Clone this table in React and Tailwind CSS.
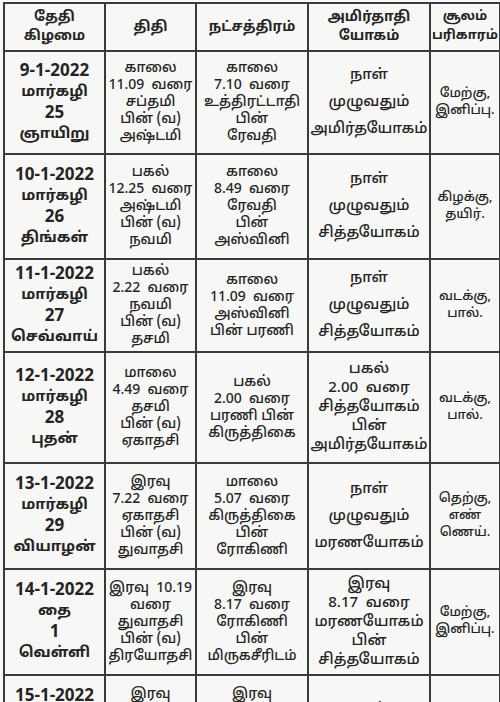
import React from "react";

const rows = [
  {
    h: "h-[103px]",
    date: ["9-1-2022", "மார்கழி", "25", "ஞாயிறு"],
    thithi: ["காலை", "11.09  வரை", "சப்தமி", "பின் (வ)", "அஷ்டமி"],
    star: ["காலை", "7.10  வரை", "உத்திரட்டாதி", "பின்", "ரேவதி"],
    yogam: ["நாள்", "முழுவதும்", "அமிர்தயோகம்"],
    soolam: ["மேற்கு,", "இனிப்பு."],
    spread: true,
  },
  {
    h: "h-[105px]",
    date: ["10-1-2022", "மார்கழி", "26", "திங்கள்"],
    thithi: ["பகல்", "12.25  வரை", "அஷ்டமி", "பின் (வ)", "நவமி"],
    star: ["காலை", "8.49  வரை", "ரேவதி", "பின்", "அஸ்வினி"],
    yogam: ["நாள்", "முழுவதும்", "சித்தயோகம்"],
    soolam: ["கிழக்கு,", "தயிர்."],
    spread: true,
  },
  {
    h: "h-[93px]",
    date: ["11-1-2022", "மார்கழி", "27", "செவ்வாய்"],
    thithi: ["பகல்", "2.22  வரை", "நவமி", "பின் (வ)", "தசமி"],
    star: ["காலை", "11.09  வரை", "அஸ்வினி", "பின் பரணி"],
    yogam: ["நாள்", "முழுவதும்", "சித்தயோகம்"],
    soolam: ["வடக்கு,", "பால்."],
    spread: true,
  },
  {
    h: "h-[111px]",
    date: ["12-1-2022", "மார்கழி", "28", "புதன்"],
    thithi: ["மாலை", "4.49  வரை", "தசமி", "பின் (வ)", "ஏகாதசி"],
    star: ["பகல்", "2.00  வரை", "பரணி பின்", "கிருத்திகை"],
    yogam: ["பகல்", "2.00  வரை", "சித்தயோகம்", "பின்", "அமிர்தயோகம்"],
    soolam: ["வடக்கு,", "பால்."],
  },
  {
    h: "h-[106px]",
    date: ["13-1-2022", "மார்கழி", "29", "வியாழன்"],
    thithi: ["இரவு", "7.22  வரை", "ஏகாதசி", "பின் (வ)", "துவாதசி"],
    star: ["மாலை", "5.07  வரை", "கிருத்திகை", "பின்", "ரோகிணி"],
    yogam: ["நாள்", "முழுவதும்", "மரணயோகம்"],
    soolam: ["தெற்கு,", "எண்", "ணெய்."],
    spread: true,
  },
  {
    h: "h-[106px]",
    date: ["14-1-2022", "தை", "1", "வெள்ளி"],
    thithi: ["இரவு  10.19", "வரை", "துவாதசி", "பின் (வ)", "திரயோதசி"],
    star: ["இரவு", "8.17  வரை", "ரோகிணி", "பின்", "மிருகசீரிடம்"],
    yogam: ["இரவு", "8.17  வரை", "மரணயோகம்", "பின்", "சித்தயோகம்"],
    soolam: ["மேற்கு,", "இனிப்பு."],
  },
  {
    h: "h-[106px]",
    date: ["15-1-2022", "தை", "2", "சனி"],
    thithi: ["இரவு", "12.57  வரை", "திரயோதசி", "பின் (வ)", "சதுர்த்தசி"],
    star: ["இரவு", "11.01  வரை", "மிருகசீரிடம்", "பின்", "திருவாதிரை"],
    yogam: ["நாள்", "முழுவதும்", "சித்தயோகம்"],
    soolam: ["கிழக்கு,", "தயிர்."],
  },
];

function Lines({ items, spread, dates }) {
  return (
    <div className={spread ? "flex flex-col gap-[8px]" : "flex flex-col"}>
      {items.map((t, i) => (
        <span
          key={i}
          className={
            dates && (i === 1 || i === 3)
              ? "whitespace-pre text-[15px]"
              : "whitespace-pre"
          }
        >
          {t}
        </span>
      ))}
    </div>
  );
}

export default function App() {
  const cell = "border-2 border-[#3a3a3a] text-center align-middle p-0 overflow-hidden";
  return (
    <div
      className="w-[500px] h-[702px] overflow-hidden bg-[#f7f7f5] pt-[2px] pl-[3px] text-[#242424]"
      style={{ fontFamily: '"Noto Sans Tamil", "Noto Sans", "Lohit Tamil", sans-serif' }}
    >
      <table className="table-fixed border-collapse w-[496px] text-[14px] leading-[17px] font-medium">
        <colgroup>
          <col className="w-[101px]" />
          <col className="w-[91px]" />
          <col className="w-[112px]" />
          <col className="w-[122px]" />
          <col className="w-[70px]" />
        </colgroup>
        <thead>
          <tr className="h-[48px] leading-[19px]">
            <th className={cell + " font-bold"}>
              தேதி
              <br />
              கிழமை
            </th>
            <th className={cell + " font-bold"}>திதி</th>
            <th className={cell + " font-bold"}>நட்சத்திரம்</th>
            <th className={cell + " font-bold"}>
              அமிர்தாதி
              <br />
              யோகம்
            </th>
            <th className={cell + " font-bold text-[13px]"}>
              சூலம்
              <br />
              பரிகாரம்
            </th>
          </tr>
        </thead>
        <tbody>
          {rows.map((r, i) => (
            <tr key={i} className={r.h}>
              <td className={cell + " font-bold text-[17px] leading-[21px]"}>
                <Lines items={r.date} dates />
              </td>
              <td className={cell}>
                <Lines items={r.thithi} />
              </td>
              <td className={cell}>
                <Lines items={r.star} />
              </td>
              <td className={cell + " text-[15px] leading-[19px]"}>
                <Lines items={r.yogam} spread={r.spread} />
              </td>
              <td className={cell + " text-[13px] leading-[17px]"}>
                <Lines items={r.soolam} />
              </td>
            </tr>
          ))}
        </tbody>
      </table>
    </div>
  );
}
